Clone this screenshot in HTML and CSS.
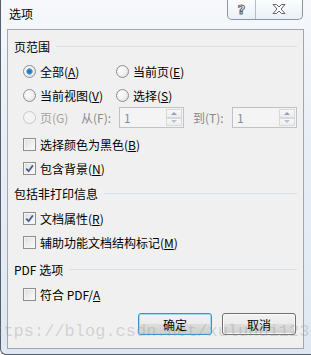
FILE: index.html
```html
<!DOCTYPE html>
<html lang="zh-CN">
<head>
    <meta charset="UTF-8">
    <meta name="viewport" content="width=device-width, initial-scale=1.0">
    <title>选项</title>
    <link rel="stylesheet" href="styles.css">
</head>
<body>

    <div class="window">
        <div class="titlebar">
            <span class="title">选项</span>
            <div class="caption-buttons">
                <span class="cap-btn help">?</span>
                <span class="cap-btn close">
                    <svg width="14" height="10" viewBox="0 0 14 10">
                        <polygon points="1,0.5 4.5,0.5 7,3 9.5,0.5 13,0.5 9,5 13,9.5 9.5,9.5 7,7 4.5,9.5 1,9.5 5,5" fill="#fff" stroke="#5f6368" stroke-width="1"/>
                    </svg>
                </span>
            </div>
        </div>

        <div class="client">
            <!-- 页范围 -->
            <div class="group-title first"><span>页范围</span><span class="rule"></span></div>
            <div class="row top">
                <label class="opt col1"><span class="radio checked"></span>全部(<u>A</u>)</label>
                <label class="opt"><span class="radio"></span>当前页(<u>E</u>)</label>
            </div>
            <div class="row">
                <label class="opt col1"><span class="radio"></span>当前视图(<u>V</u>)</label>
                <label class="opt"><span class="radio"></span>选择(<u>S</u>)</label>
            </div>
            <div class="row range">
                <label class="opt disabled page-opt"><span class="radio"></span>页(G)</label>
                <span class="range-label">从(F):</span>
                <div class="spin">
                    <span class="spin-value">1</span>
                    <span class="spin-btns"><span class="up"></span><span class="down"></span></span>
                </div>
                <span class="range-label to">到(T):</span>
                <div class="spin">
                    <span class="spin-value">1</span>
                    <span class="spin-btns"><span class="up"></span><span class="down"></span></span>
                </div>
            </div>
            <div class="row gap4">
                <label class="opt"><span class="check"></span>选择颜色为黑色(<u>B</u>)</label>
            </div>
            <div class="row">
                <label class="opt"><span class="check on"><svg width="9" height="9" viewBox="0 0 9 9"><path d="M1.2 4.6 L3.6 7.2 L7.9 1.4" stroke="#48608e" stroke-width="1.8" fill="none"/></svg></span>包含背景(<u>N</u>)</label>
            </div>

            <!-- 包括非打印信息 -->
            <div class="group-title"><span>包括非打印信息</span><span class="rule"></span></div>
            <div class="row top">
                <label class="opt"><span class="check on"><svg width="9" height="9" viewBox="0 0 9 9"><path d="M1.2 4.6 L3.6 7.2 L7.9 1.4" stroke="#48608e" stroke-width="1.8" fill="none"/></svg></span>文档属性(<u>R</u>)</label>
            </div>
            <div class="row">
                <label class="opt"><span class="check"></span>辅助功能文档结构标记(<u>M</u>)</label>
            </div>

            <!-- PDF 选项 -->
            <div class="group-title last"><span>PDF 选项</span><span class="rule"></span></div>
            <div class="row top">
                <label class="opt"><span class="check"></span>符合 PDF/<u>A</u></label>
            </div>

            <div class="buttons">
                <button class="btn default">确定</button>
                <button class="btn">取消</button>
            </div>
        </div>

        <div class="watermark">https://blog.csdn.net/xuluhui123</div>
    </div>

</body>
</html>
```

FILE: styles.css
```css
body {
    margin: 0;
    width: 311px;
    height: 355px;
    overflow: hidden;
    font-family: "Noto Sans CJK SC", "Microsoft YaHei", sans-serif;
    font-size: 12px;
    color: #000;
}
.window {
    position: relative;
    box-sizing: border-box;
    height: 355px;
    border-left: 1px solid #56606c;
    border-bottom: 1px solid #56606c;
    border-bottom-left-radius: 6px;
    background: linear-gradient(to bottom, #f6f8fb 0%, #e8eef6 40%, #dfe8f2 100%);
}
.titlebar {
    display: flex;
    align-items: flex-start;
    justify-content: space-between;
    height: 29px;
}
.title {
    padding-left: 8px;
    line-height: 28px;
}
.caption-buttons {
    display: flex;
    margin-top: -1px;
    margin-right: 8px;
    height: 20px;
    border: 1px solid #8d969f;
    border-top: none;
    border-radius: 0 0 5px 5px;
    background: linear-gradient(to bottom, #fdfeff, #e9f0f7);
    overflow: hidden;
}
.cap-btn {
    display: flex;
    align-items: center;
    justify-content: center;
}
.help {
    width: 27px;
    border-right: 1px solid #b4bcc4;
    font-family: "DejaVu Sans", sans-serif;
    font-weight: bold;
    font-size: 13px;
    color: #fff;
    -webkit-text-stroke: 1px #5f6368;
}
.close {
    width: 46px;
}
.client {
    box-sizing: border-box;
    margin-left: 6px;
    width: 297px;
    height: 320px;
    border: 1px solid #a3a7ab;
    background-color: #f0f0f0;
}
.group-title {
    display: flex;
    align-items: center;
    height: 16px;
    margin-top: 5px;
    padding: 0 6px;
}
.group-title.first {
    margin-top: 8px;
}
.group-title.last {
    margin-top: 7px;
}
.rule {
    flex: 1;
    height: 1px;
    margin-left: 6px;
    background-color: #d5dfe5;
}
.row {
    display: flex;
    align-items: center;
    height: 24px;
    padding-left: 15px;
}
.row.top {
    margin-top: 5px;
}
.row.gap4 {
    margin-top: 4px;
}
.row.range {
    height: 21px;
}
.opt {
    display: flex;
    align-items: center;
    white-space: nowrap;
}
.opt u {
    text-underline-offset: 1px;
}
.col1 {
    width: 93px;
}
.radio {
    box-sizing: border-box;
    width: 13px;
    height: 13px;
    margin-right: 4px;
    border: 1px solid #8e8f8f;
    border-radius: 50%;
    background: radial-gradient(circle at 35% 35%, #ffffff 0%, #f0f0f0 50%, #d4d4d4 100%);
}
.radio.checked {
    background:
        radial-gradient(circle at 50% 50%, #2d6ca0 0%, #3a86c3 28%, #7bbbe6 40%, transparent 42%),
        radial-gradient(circle at 35% 35%, #ffffff 0%, #eeeeee 55%, #d4d4d4 100%);
}
.disabled {
    color: #a3a3a3;
}
.disabled .radio {
    border-color: #c8c8c8;
    background: #f4f4f4;
}
.page-opt {
    width: 58px;
}
.range-label {
    width: 38px;
    color: #8a8a8a;
}
.range-label.to {
    width: 39px;
    margin-left: 9px;
}
.spin {
    box-sizing: border-box;
    display: flex;
    align-items: center;
    justify-content: space-between;
    width: 65px;
    height: 21px;
    border: 1px solid #bfc3c7;
    background-color: #f4f4f4;
}
.spin-value {
    padding-left: 4px;
    color: #8c8c8c;
}
.spin-btns {
    display: flex;
    flex-direction: column;
    width: 16px;
    height: 17px;
    margin-right: 1px;
}
.spin-btns span {
    box-sizing: border-box;
    flex: 1;
    display: flex;
    align-items: center;
    justify-content: center;
    border: 1px solid #d9d9d9;
    background: linear-gradient(to bottom, #f8f8f8, #ececec);
}
.spin-btns .up::after {
    content: "";
    border-left: 3px solid transparent;
    border-right: 3px solid transparent;
    border-bottom: 3px solid #8da2bd;
}
.spin-btns .down::after {
    content: "";
    border-left: 3px solid transparent;
    border-right: 3px solid transparent;
    border-top: 3px solid #b8c2cf;
}
.check {
    box-sizing: border-box;
    display: flex;
    align-items: center;
    justify-content: center;
    width: 13px;
    height: 13px;
    margin-right: 4px;
    border: 1px solid #8e8f8f;
    background: linear-gradient(135deg, #dcdcdc 0%, #f0f0f0 60%, #fbfbfb 100%);
    box-shadow: inset 0 0 0 1px #f4f4f4;
}
.buttons {
    display: flex;
    justify-content: flex-end;
    gap: 10px;
    margin-top: 7px;
    padding-right: 7px;
}
.btn {
    box-sizing: border-box;
    width: 74px;
    height: 22px;
    padding: 0;
    font-family: inherit;
    font-size: 12px;
    color: #000;
    border: 1px solid #707070;
    border-radius: 3px;
    background: linear-gradient(to bottom, #f2f2f2 0%, #ebebeb 50%, #dddddd 51%, #cfcfcf 100%);
    box-shadow: inset 0 0 0 1px #fbfbfb;
}
.btn.default {
    border-color: #3c8fd1;
    box-shadow: inset 0 0 0 1px #9bdcf8;
}
.watermark {
    position: absolute;
    left: -18px;
    top: 322px;
    font-family: "Liberation Mono", monospace;
    font-size: 17px;
    line-height: 20px;
    color: rgba(150, 150, 150, 0.35);
    white-space: nowrap;
    pointer-events: none;
}
```
